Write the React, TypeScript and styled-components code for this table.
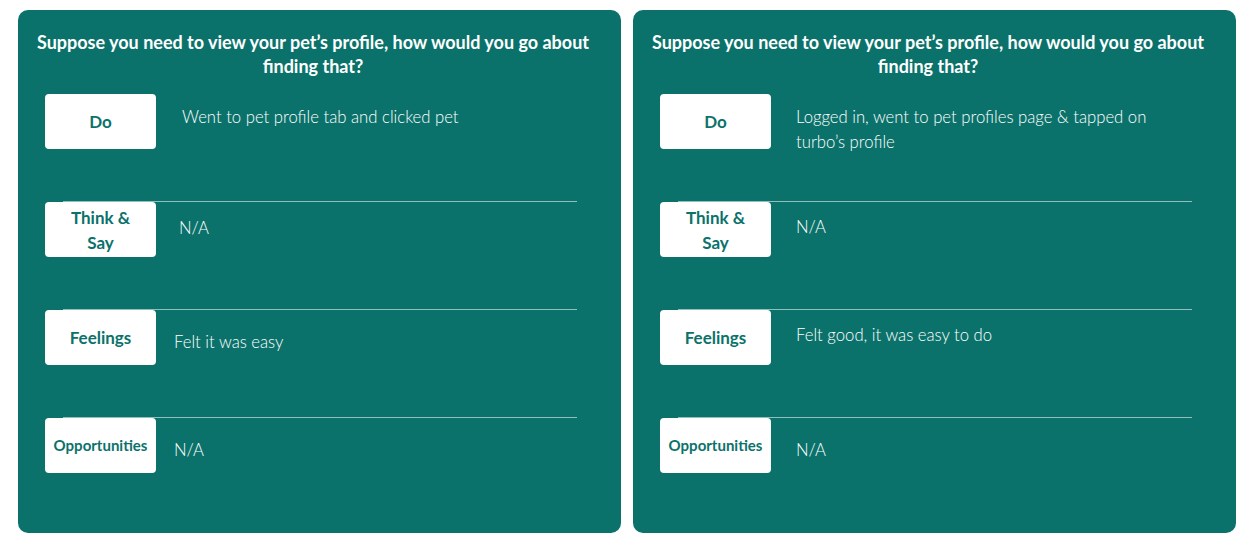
import React from "react";
import styled, { createGlobalStyle } from "styled-components";

const GlobalStyle = createGlobalStyle`
	body {
		margin: 0;
		background: #ffffff;
		font-family: "Lato", "Open Sans", sans-serif;
	}
`;

const Page = styled.div`
	display: flex;
	align-items: flex-start;
	gap: 12px;
	padding: 10px 17px 25px 18px;
`;

const Card = styled.section`
	flex: 0 0 603px;
	box-sizing: border-box;
	background: #0b726b;
	border-radius: 10px;
	padding: 20px 27px 60px 27px;
`;

const Title = styled.h2`
	margin: 0 -2px 16px -15px;
	color: #ffffff;
	font-size: 18px;
	font-weight: 700;
	line-height: 24px;
	text-align: center;
`;

const Divider = styled.hr`
	margin: 52px 0 0 18px;
	width: 514px;
	height: 1px;
	border: 0;
	background: rgba(255, 255, 255, 0.55);
`;

const Row = styled.div`
	display: flex;
	align-items: flex-start;
	height: 55px;
`;

const Label = styled.div<{ $small?: boolean }>`
	flex: 0 0 111px;
	height: 55px;
	display: flex;
	align-items: center;
	justify-content: center;
	box-sizing: border-box;
	padding: 0 4px;
	background: #ffffff;
	border-radius: 4px;
	color: #0b726b;
	font-size: ${(p) => (p.$small ? 15 : 17)}px;
	font-weight: 700;
	line-height: 25px;
	text-align: center;
	white-space: pre-line;
`;

const Value = styled.p<{ $left: number; $top: number }>`
	margin: ${(p) => p.$top}px 0 0 ${(p) => p.$left}px;
	max-width: 380px;
	color: #ffffff;
	font-size: 16.7px;
	font-weight: 300;
	line-height: 25px;
`;

type Entry = { label: string; value: string; left: number; top: number };

const question =
	"Suppose you need to view your pet\u2019s profile, how would you go about finding that?";

const cards: Entry[][] = [
	[
		{ label: "Do", value: "Went to pet profile tab and clicked pet", left: 26, top: 11 },
		{ label: "Think &\nSay", value: "N/A", left: 23, top: 14 },
		{ label: "Feelings", value: "Felt it was easy", left: 18, top: 20 },
		{ label: "Opportunities", value: "N/A", left: 18, top: 20 },
	],
	[
		{
			label: "Do",
			value: "Logged in, went to pet profiles page & tapped on turbo\u2019s profile",
			left: 25,
			top: 11,
		},
		{ label: "Think &\nSay", value: "N/A", left: 25, top: 13 },
		{ label: "Feelings", value: "Felt good, it was easy to do", left: 25, top: 13 },
		{ label: "Opportunities", value: "N/A", left: 25, top: 20 },
	],
];

export default function App() {
	return (
		<>
			<GlobalStyle />
			<Page>
				{cards.map((rows, i) => (
					<Card key={i}>
						<Title>{question}</Title>
						{rows.map((r, j) => (
							<React.Fragment key={r.label}>
								{j > 0 && <Divider />}
								<Row>
									<Label $small={r.label === "Opportunities"}>{r.label}</Label>
									<Value $left={r.left} $top={r.top}>
										{r.value}
									</Value>
								</Row>
							</React.Fragment>
						))}
					</Card>
				))}
			</Page>
		</>
	);
}
